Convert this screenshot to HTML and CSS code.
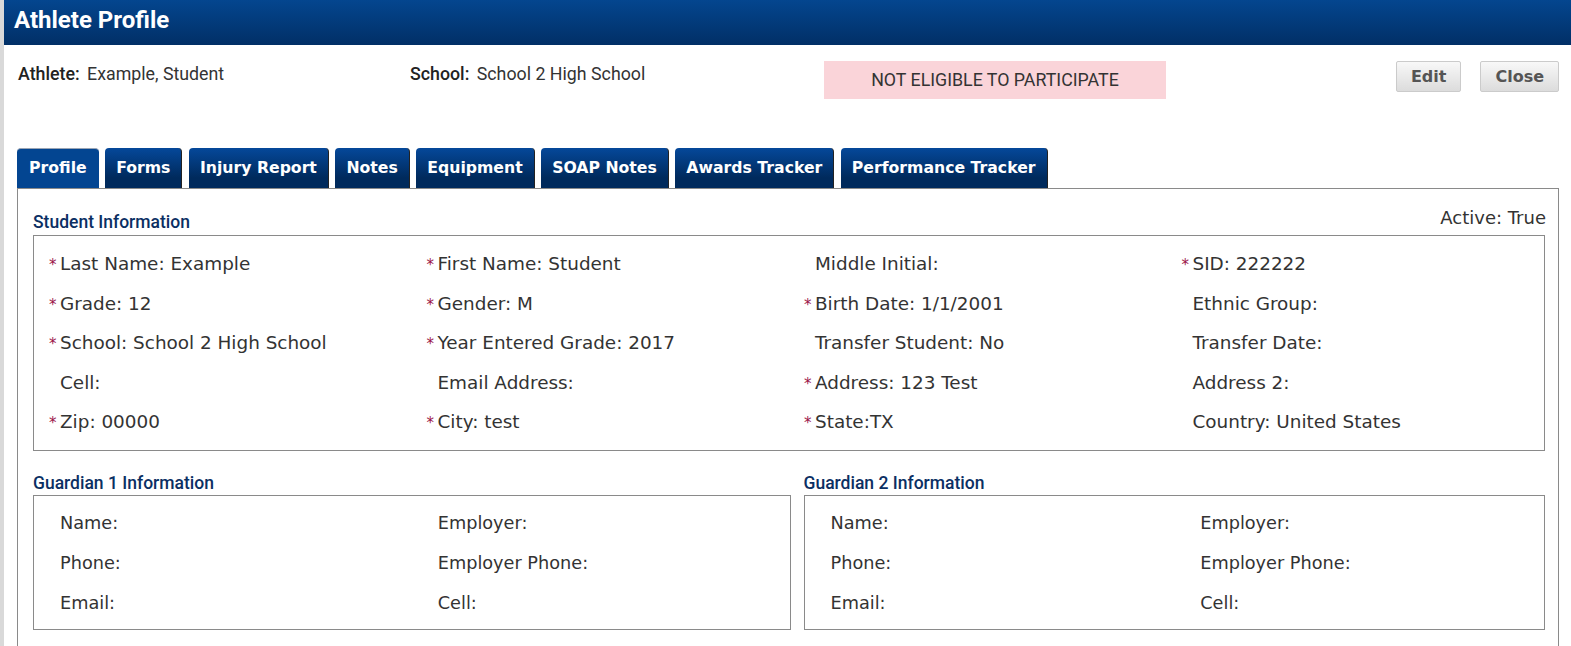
FILE: index.html
```html
<!DOCTYPE html>
<html>

<head>
  <title>Athlete Profile</title>
  <link rel="stylesheet" href="styles.css">
</head>

<body>
  <div class="titlebar">Athlete Profile</div>

  <div class="page">
    <div class="inforow">
      <div class="info athlete"><span class="infolabel">Athlete:</span> Example, Student</div>
      <div class="info school"><span class="infolabel">School:</span> School 2 High School</div>
      <div class="status">NOT ELIGIBLE TO PARTICIPATE</div>
      <div class="buttons">
        <button class="btn">Edit</button>
        <button class="btn">Close</button>
      </div>
    </div>

    <div class="tabs">
      <div class="tab active">Profile</div>
      <div class="tab">Forms</div>
      <div class="tab">Injury Report</div>
      <div class="tab">Notes</div>
      <div class="tab">Equipment</div>
      <div class="tab">SOAP Notes</div>
      <div class="tab">Awards Tracker</div>
      <div class="tab">Performance Tracker</div>
    </div>

    <div class="panel">
      <div class="headrow">
        <div class="sectiontitle">Student Information</div>
        <div class="active-flag">Active: True</div>
      </div>
      <div class="box studentbox">
        <div class="field"><span class="req">*</span>Last Name: Example</div>
        <div class="field"><span class="req">*</span>First Name: Student</div>
        <div class="field"><span class="req blank">*</span>Middle Initial:</div>
        <div class="field"><span class="req">*</span>SID: 222222</div>

        <div class="field"><span class="req">*</span>Grade: 12</div>
        <div class="field"><span class="req">*</span>Gender: M</div>
        <div class="field"><span class="req">*</span>Birth Date: 1/1/2001</div>
        <div class="field"><span class="req blank">*</span>Ethnic Group:</div>

        <div class="field"><span class="req">*</span>School: School 2 High School</div>
        <div class="field"><span class="req">*</span>Year Entered Grade: 2017</div>
        <div class="field"><span class="req blank">*</span>Transfer Student: No</div>
        <div class="field"><span class="req blank">*</span>Transfer Date:</div>

        <div class="field"><span class="req blank">*</span>Cell:</div>
        <div class="field"><span class="req blank">*</span>Email Address:</div>
        <div class="field"><span class="req">*</span>Address: 123 Test</div>
        <div class="field"><span class="req blank">*</span>Address 2:</div>

        <div class="field"><span class="req">*</span>Zip: 00000</div>
        <div class="field"><span class="req">*</span>City: test</div>
        <div class="field"><span class="req">*</span>State:TX</div>
        <div class="field"><span class="req blank">*</span>Country: United States</div>
      </div>

      <div class="guardians">
        <div class="guardian">
          <div class="sectiontitle">Guardian 1 Information</div>
          <div class="box guardianbox">
            <div class="gfield">Name:</div>
            <div class="gfield">Employer:</div>
            <div class="gfield">Phone:</div>
            <div class="gfield">Employer Phone:</div>
            <div class="gfield">Email:</div>
            <div class="gfield">Cell:</div>
          </div>
        </div>
        <div class="guardian">
          <div class="sectiontitle">Guardian 2 Information</div>
          <div class="box guardianbox">
            <div class="gfield">Name:</div>
            <div class="gfield">Employer:</div>
            <div class="gfield">Phone:</div>
            <div class="gfield">Employer Phone:</div>
            <div class="gfield">Email:</div>
            <div class="gfield">Cell:</div>
          </div>
        </div>
      </div>
    </div>
  </div>
</body>

</html>
```

FILE: styles.css
```css
html, body {
  height: 100%;
}
body {
  margin: 0;
  box-sizing: border-box;
  border-left: 4px solid #d9d9d9;
  font-family: "DejaVu Sans", Verdana, sans-serif;
  color: #333;
  background: #fff;
  overflow: hidden;
}
.titlebar {
  height: 45px;
  line-height: 41px;
  padding-left: 10px;
  background: linear-gradient(#04468f, #012f66);
  color: #fff;
  font-family: Roboto, "Liberation Sans", sans-serif;
  font-weight: bold;
  font-size: 24px;
}
.page {
  padding: 0 12px 0 13px;
}
.inforow {
  display: flex;
  align-items: flex-start;
  padding-top: 16px;
}
.info {
  font-family: Roboto, "Liberation Sans", sans-serif;
  font-size: 17.8px;
  line-height: 20px;
  padding-top: 3px;
  color: #333;
}
.infolabel {
  font-weight: 500;
  color: #222;
  margin-right: 3px;
}
.athlete {
  width: 392px;
  padding-left: 1px;
}
.school {
  width: 414px;
}
.status {
  width: 342px;
  height: 38px;
  line-height: 38px;
  text-align: center;
  background: #fad4d9;
  font-family: Roboto, "Liberation Sans", sans-serif;
  font-size: 17.8px;
  color: #333;
}
.buttons {
  margin-left: auto;
  display: flex;
  gap: 19px;
}
.btn {
  height: 31px;
  padding: 0 14px;
  border: 1px solid #cbcbcb;
  border-radius: 2px;
  background: linear-gradient(#f8f8f8, #dcdcdc);
  font-family: "DejaVu Sans", Verdana, sans-serif;
  font-weight: bold;
  font-size: 16px;
  color: #555;
}
.tabs {
  display: flex;
  gap: 6.5px;
  margin-top: 49px;
}
.tab {
  height: 40px;
  line-height: 40px;
  padding: 0 11px;
  border-radius: 4px 4px 0 0;
  border-right: 1px solid #222;
  background: linear-gradient(#05489a, #002a5c 75%);
  color: #fff;
  font-size: 15.7px;
  font-weight: bold;
  box-sizing: border-box;
}
.tab.active {
  background: #034591;
  border-top: 1px solid #9aa5b5;
  border-right: none;
  line-height: 38px;
  padding: 0 12px;
}
.panel {
  border: 1px solid #8a8a8a;
  border-bottom: none;
  padding: 19px 13px 0 15px;
  height: 500px;
}
.headrow {
  display: flex;
  justify-content: space-between;
  align-items: flex-end;
  margin-bottom: 3px;
}
.sectiontitle {
  font-family: Roboto, "Liberation Sans", sans-serif;
  font-weight: 500;
  font-size: 17.5px;
  line-height: 20px;
  color: #0b2f63;
}
.active-flag {
  font-size: 18px;
  line-height: 20px;
  margin-bottom: 4px;
  margin-right: -1px;
}
.box {
  border: 1px solid #8a8a8a;
}
.studentbox {
  display: grid;
  grid-template-columns: repeat(4, 1fr);
  padding: 8px 0;
}
.field {
  padding-left: 15px;
  font-size: 18.4px;
  line-height: 39.6px;
  white-space: nowrap;
}
.req {
  display: inline-block;
  width: 11px;
  font-size: 15px;
  line-height: 1;
  color: #9b1449;
}
.req.blank {
  visibility: hidden;
}
.guardians {
  display: grid;
  grid-template-columns: 757fr 741fr;
  gap: 13px;
  margin-top: 22px;
}
.guardian .sectiontitle {
  margin-bottom: 2px;
}
.guardianbox {
  display: grid;
  grid-template-columns: 1fr 1fr;
  padding: 7px 0 6px;
}
.gfield {
  padding-left: 26px;
  font-size: 17.7px;
  line-height: 40px;
}
```
